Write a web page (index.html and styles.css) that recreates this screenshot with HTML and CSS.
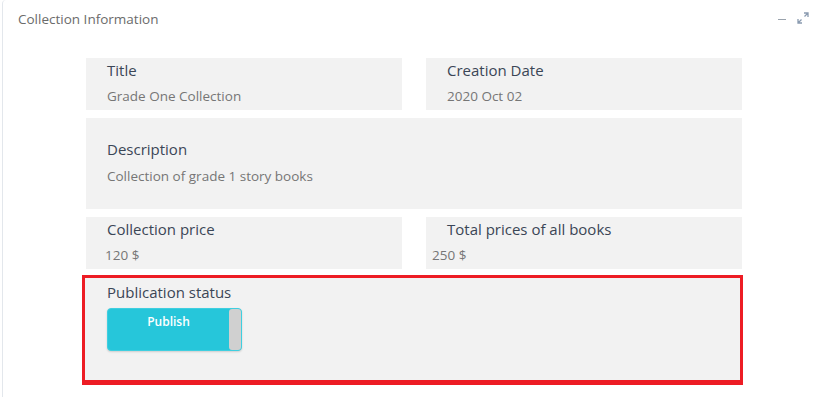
FILE: index.html
```html
<!DOCTYPE html>
<html lang="en">
<head>
  <meta charset="UTF-8" />
  <meta name="viewport" content="width=device-width, initial-scale=1.0"/>
  <title>Collection Information</title>
  <link rel="stylesheet" href="styles.css">
</head>
<body>

  <div class="panel">
    <div class="panel-header">
      <span class="panel-title">Collection Information</span>
      <div class="panel-tools">
        <span class="tool-min"></span>
        <svg class="tool-expand" width="12" height="12" viewBox="0 0 12 12">
          <path d="M7 1h4v4M11 1L7.5 4.5" stroke="#8a9bb0" stroke-width="1.3" fill="none"/>
          <path d="M5 11H1V7M1 11l3.5-3.5" stroke="#8a9bb0" stroke-width="1.3" fill="none"/>
        </svg>
      </div>
    </div>

    <div class="info-grid">
      <div class="info-card">
        <div class="info-label">Title</div>
        <div class="info-value">Grade One Collection</div>
      </div>
      <div class="info-card">
        <div class="info-label">Creation Date</div>
        <div class="info-value">2020 Oct 02</div>
      </div>

      <div class="info-card wide tall">
        <div class="info-label">Description</div>
        <div class="info-value">Collection of grade 1 story books</div>
      </div>

      <div class="info-card">
        <div class="info-label">Collection price</div>
        <div class="info-value price">120 $</div>
      </div>
      <div class="info-card">
        <div class="info-label">Total prices of all books</div>
        <div class="info-value price shift">250 $</div>
      </div>

      <div class="info-card wide status-card">
        <div class="info-label">Publication status</div>
        <div class="toggle">
          <span class="toggle-text">Publish</span>
          <span class="toggle-handle"></span>
        </div>
      </div>
    </div>
  </div>

</body>
</html>
```

FILE: styles.css
```css
body {
  margin: 0;
  font-family: "Open Sans", "Noto Sans", sans-serif;
  background-color: #ffffff;
  color: #3d4756;
}
.panel {
  margin-left: 2px;
  height: 397px;
  border-left: 1px solid #e3e7ec;
  border-top-left-radius: 4px;
  background-color: #ffffff;
}
.panel-header {
  display: flex;
  justify-content: space-between;
  align-items: center;
  height: 38px;
  padding: 0 16px 0 15px;
}
.panel-title {
  font-size: 13.5px;
  color: #6b6b6b;
}
.panel-tools {
  display: flex;
  align-items: center;
  gap: 11px;
}
.tool-min {
  width: 8px;
  height: 1px;
  background-color: #9aa3ad;
}
.tool-expand {
  margin-top: -3px;
}
.info-grid {
  display: grid;
  grid-template-columns: 316px 316px;
  column-gap: 24px;
  row-gap: 8px;
  width: 656px;
  margin: 20px 0 0 83px;
}
.info-card {
  background-color: #f2f2f2;
  height: 52px;
  padding: 2px 21px 0;
  box-sizing: border-box;
}
.info-card.wide {
  grid-column: 1 / 3;
}
.info-card.tall {
  height: 91px;
  padding-top: 21px;
}
.info-label {
  font-size: 15px;
  line-height: 20px;
  color: #3b4656;
}
.info-value {
  margin-top: 7px;
  font-size: 13.5px;
  line-height: 18px;
  color: #767676;
}
.tall .info-value {
  margin-top: 8px;
}
.info-value.price {
  margin-left: -2px;
}
.info-value.shift {
  margin-left: -15px;
}
.status-card {
  height: 110px;
  margin: -2px -1px 0 -4px;
  padding: 4px 0 0 22px;
  border: 3px solid #ed1c24;
  border-bottom-width: 5px;
}
.toggle {
  display: flex;
  justify-content: space-between;
  width: 135px;
  height: 43px;
  margin-top: 6px;
  background-color: #26c6da;
  border: 1px solid #3fcfe0;
  border-radius: 4px;
  box-sizing: border-box;
  box-shadow: 0 1px 2px rgba(0, 0, 0, 0.15);
}
.toggle-text {
  flex: 1;
  text-align: center;
  color: #ffffff;
  font-size: 12px;
  font-weight: 600;
  line-height: 26px;
}
.toggle-handle {
  width: 12px;
  background-color: #d0d0d0;
  border-radius: 3px;
}
```
